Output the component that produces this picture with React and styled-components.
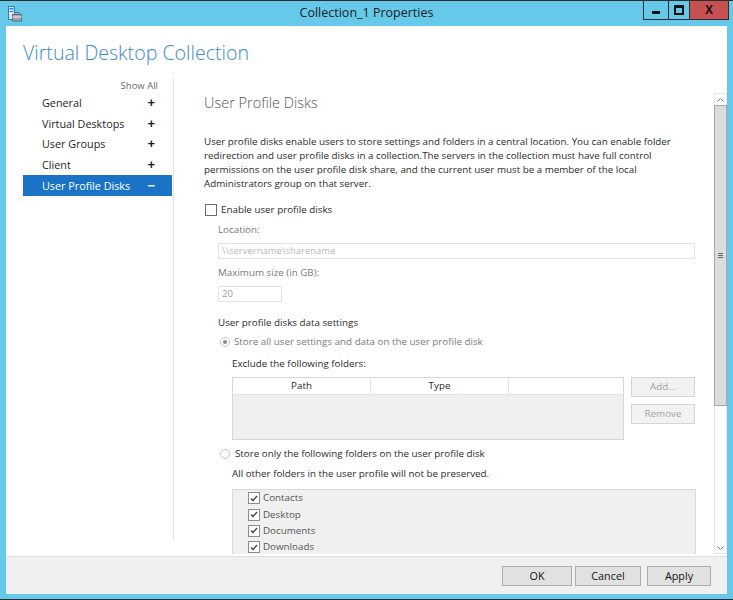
import React from 'react';
import styled, { createGlobalStyle } from 'styled-components';

const Global = createGlobalStyle`
  html, body {
    margin: 0;
    padding: 0;
    overflow: hidden;
  }
  body {
    font-family: "Open Sans", "Noto Sans", "Liberation Sans", sans-serif;
    color: #333;
  }
`;

const Frame = styled.div`
  width: 733px;
  height: 600px;
  box-sizing: border-box;
  background: #66c9ea;
  border-top: 1px solid #2d2d2d;
  border-bottom: 1px solid #2d2d2d;
  padding-bottom: 5px;
  display: flex;
  flex-direction: column;
`;

const TitleBar = styled.div`
  height: 25px;
  display: grid;
  grid-template-columns: 1fr auto 1fr;
  align-items: start;
`;

const AppIcon = styled.div`
  padding: 4px 0 0 8px;
  height: 16px;
`;

const Title = styled.div`
  font-size: 12.5px;
  line-height: 25px;
  color: #1b1b1b;
  margin-top: -1px;
`;

const WinButtons = styled.div`
  display: flex;
  justify-content: flex-end;
  padding-right: 4px;
`;

const WinButton = styled.div`
  width: ${p => p.$w}px;
  height: 19px;
  box-sizing: border-box;
  border: 1px solid #2d2d2d;
  border-top: none;
  border-left: ${p => (p.$first ? '1px solid #2d2d2d' : 'none')};
  background: ${p => (p.$close ? '#c75050' : 'transparent')};
  display: flex;
  align-items: center;
  justify-content: center;
  font-family: "Liberation Sans", sans-serif;
  font-weight: bold;
  font-size: 12px;
  color: #111;
`;

const MinGlyph = styled.div`
  width: 8px;
  height: 3px;
  background: #111;
  margin-top: 5px;
`;

const MaxGlyph = styled.div`
  width: 6px;
  height: 5px;
  border: 2px solid #111;
  border-top-width: 3px;
`;

const Client = styled.div`
  flex: 1;
  margin: 0 6px;
  background: #fff;
  display: flex;
  flex-direction: column;
  min-height: 0;
`;

const Header = styled.div`
  height: 52px;
  box-sizing: border-box;
  padding: 14px 0 0 17px;
  font-size: 19.6px;
  font-weight: 300;
  line-height: 26px;
  color: #3b8cc2;
`;

const Main = styled.div`
  flex: 1;
  display: flex;
  min-height: 0;
`;

const Nav = styled.div`
  width: 168px;
  box-sizing: border-box;
  padding: 2px 1px 0 17px;
  margin-bottom: 15px;
  border-right: 1px solid #e3e3e3;
`;

const ShowAll = styled.div`
  text-align: right;
  padding-right: 14px;
  font-size: 9.5px;
  line-height: 12px;
  color: #6a6a6a;
`;

const NavItem = styled.div`
  height: 20.75px;
  display: flex;
  align-items: center;
  justify-content: space-between;
  padding: 0 17px 0 19px;
  font-size: 10.8px;
  color: ${p => (p.$active ? '#fff' : '#1e1e1e')};
  background: ${p => (p.$active ? '#1a73c4' : 'transparent')};
`;

const Sign = styled.span`
  font-family: "Liberation Sans", sans-serif;
  font-weight: bold;
  font-size: 13px;
  line-height: 1;
`;

const Pane = styled.div`
  flex: 1;
  display: flex;
  margin: 15px 0 2px 0;
  min-width: 0;
`;

const Scroll = styled.div`
  flex: 1;
  overflow: hidden;
  padding: 0 18px 0 30px;
  font-size: 9.8px;
  line-height: 14px;
`;

const SectionTitle = styled.div`
  margin-top: 2px;
  font-size: 14.5px;
  font-weight: 300;
  line-height: 16px;
  color: #555;
`;

const Para = styled.p`
  margin: 24px 0 0 0;
  color: #2a2a2a;
  line-height: 14px;
`;

const Row = styled.div`
  display: flex;
  align-items: center;
  margin-top: ${p => p.$mt || 0}px;
  margin-left: ${p => p.$ml || 0}px;
  gap: ${p => p.$gap || 0}px;
  height: 14px;
  color: ${p => (p.$dim ? '#7a7a7a' : '#2a2a2a')};
`;

const Label = styled.div`
  margin-top: ${p => p.$mt || 0}px;
  margin-left: ${p => p.$ml || 0}px;
  height: 14px;
  color: ${p => (p.$dim ? '#7a7a7a' : '#2a2a2a')};
`;

const Box = styled.div`
  width: ${p => p.$size}px;
  height: ${p => p.$size}px;
  box-sizing: border-box;
  border: 1px solid ${p => p.$border || '#707070'};
  background: #fff;
  display: flex;
  align-items: center;
  justify-content: center;
  flex-shrink: 0;
`;

const Radio = styled.div`
  width: 10px;
  height: 10px;
  box-sizing: border-box;
  border-radius: 50%;
  border: 1px solid #c4c4c4;
  background: #fff;
  display: flex;
  align-items: center;
  justify-content: center;
  flex-shrink: 0;
  &::after {
    content: '';
    display: ${p => (p.$on ? 'block' : 'none')};
    width: 4px;
    height: 4px;
    border-radius: 50%;
    background: #8a8a8a;
  }
`;

const TextInput = styled.div`
  margin: ${p => p.$mt}px 0 0 14px;
  width: ${p => p.$w}px;
  height: 16px;
  box-sizing: border-box;
  border: 1px solid #e2e2e2;
  padding-left: 3px;
  font-size: 9.5px;
  line-height: 14px;
  color: ${p => p.$c};
`;

const TableRow = styled.div`
  display: flex;
  gap: 7px;
  margin: 6px 0 0 28px;
`;

const Table = styled.div`
  width: 392px;
  height: 63px;
  box-sizing: border-box;
  border: 1px solid #d7d7d7;
  background: #f0f0f0;
`;

const THead = styled.div`
  display: grid;
  grid-template-columns: 138px 138px 1fr;
  height: 16px;
  background: #fff;
  border-bottom: 1px solid #e4e4e4;
`;

const Th = styled.div`
  text-align: center;
  line-height: 16px;
  color: #2a2a2a;
  border-right: ${p => (p.$last ? 'none' : '1px solid #e4e4e4')};
`;

const SideButtons = styled.div`
  display: flex;
  flex-direction: column;
  gap: 7px;
`;

const SideButton = styled.div`
  width: 64px;
  height: 20px;
  box-sizing: border-box;
  border: 1px solid #d5d5d5;
  background: #f2f2f2;
  color: #a3a3a3;
  text-align: center;
  line-height: 18px;
`;

const FolderList = styled.div`
  margin: 8px 0 0 28px;
  height: 90px;
  box-sizing: border-box;
  border: 1px solid #d9d9d9;
  border-bottom: none;
  background: #f0f0f0;
  padding: 0 0 0 15px;
`;

const FolderRow = styled.div`
  display: flex;
  align-items: center;
  gap: 3px;
  height: 16.4px;
  color: #555;
`;

const ScrollBar = styled.div`
  width: 13px;
  box-sizing: border-box;
  border: 1px solid #e6e6e6;
  display: flex;
  flex-direction: column;
  background: #fff;
`;

const Arrow = styled.div`
  height: 11px;
  display: flex;
  align-items: center;
  justify-content: center;
`;

const Thumb = styled.div`
  height: 301px;
  box-sizing: border-box;
  margin: 0 -1px;
  border: 1px solid #a8a8a8;
  background: #dcdcdc;
  display: flex;
  align-items: center;
  justify-content: center;
`;

const Grip = styled.div`
  width: 5px;
  height: 5px;
  background: repeating-linear-gradient(#666 0 1px, transparent 1px 2px);
`;

const Track = styled.div`
  flex: 1;
`;

const Footer = styled.div`
  height: 38px;
  box-sizing: border-box;
  border-top: 1px solid #dfdfdf;
  background: #f0f0f0;
  display: flex;
  align-items: center;
  justify-content: flex-end;
  padding-right: 16px;
`;

const DlgButton = styled.div`
  width: ${p => p.$w}px;
  height: 20px;
  margin-left: ${p => p.$ml}px;
  box-sizing: border-box;
  border: 1px solid #adadad;
  background: #e1e1e1;
  text-align: center;
  line-height: 18px;
  font-size: 10.8px;
  color: #111;
`;

const Check = ({ size = 12, border }) => (
  <Box $size={size} $border={border}>
    <svg width="8" height="7" viewBox="0 0 8 7">
      <path d="M1 3.5 L3 5.5 L7 1" fill="none" stroke="#3a3a3a" strokeWidth="1.3" />
    </svg>
  </Box>
);

const navItems = ['General', 'Virtual Desktops', 'User Groups', 'Client'];
const folders = ['Contacts', 'Desktop', 'Documents', 'Downloads'];

export default function App() {
  return (
    <>
      <Global />
      <Frame>
        <TitleBar>
          <AppIcon>
            <svg width="14" height="16" viewBox="0 0 14 16">
              <rect x="0.5" y="0.5" width="6" height="13" fill="#dbe9f6" stroke="#2c7fc9" />
              <rect x="1.5" y="2" width="4" height="1.5" fill="#2c7fc9" />
              <rect x="1.5" y="5" width="4" height="1" fill="#2c7fc9" />
              <rect x="4.5" y="8.5" width="9" height="6.5" fill="#9aa7b3" stroke="#5f6d7a" />
              <rect x="7" y="6.5" width="4" height="2" fill="none" stroke="#5f6d7a" />
              <rect x="4.5" y="10.5" width="9" height="1" fill="#e9eef2" />
            </svg>
          </AppIcon>
          <Title>Collection_1 Properties</Title>
          <WinButtons>
            <WinButton $w={26} $first><MinGlyph /></WinButton>
            <WinButton $w={21}><MaxGlyph /></WinButton>
            <WinButton $w={39} $close>X</WinButton>
          </WinButtons>
        </TitleBar>
        <Client>
          <Header>Virtual Desktop Collection</Header>
          <Main>
            <Nav>
              <ShowAll>Show All</ShowAll>
              {navItems.map(n => (
                <NavItem key={n}>
                  {n}
                  <Sign>+</Sign>
                </NavItem>
              ))}
              <NavItem $active>
                User Profile Disks
                <Sign>−</Sign>
              </NavItem>
            </Nav>
            <Pane>
              <Scroll>
                <SectionTitle>User Profile Disks</SectionTitle>
                <Para>
                  User profile disks enable users to store settings and folders in a central location. You can enable folder<br />
                  redirection and user profile disks in a collection.The servers in the collection must have full control<br />
                  permissions on the user profile disk share, and the current user must be a member of the local<br />
                  Administrators group on that server.
                </Para>
                <Row $mt={12} $ml={1} $gap={4}>
                  <Box $size={12} $border="#6b6b6b" />
                  Enable user profile disks
                </Row>
                <Label $mt={6} $ml={14} $dim>Location:</Label>
                <TextInput $mt={6} $w={477} $c="#b8b8b8">\\servername\sharename</TextInput>
                <Label $mt={7} $ml={14} $dim>Maximum size (in GB):</Label>
                <TextInput $mt={6} $w={64} $c="#9a9a9a">20</TextInput>
                <Label $mt={14} $ml={14}>User profile disks data settings</Label>
                <Row $mt={5} $ml={16} $gap={4} $dim>
                  <Radio $on />
                  Store all user settings and data on the user profile disk
                </Row>
                <Label $mt={8} $ml={28}>Exclude the following folders:</Label>
                <TableRow>
                  <Table>
                    <THead>
                      <Th>Path</Th>
                      <Th>Type</Th>
                      <Th $last />
                    </THead>
                  </Table>
                  <SideButtons>
                    <SideButton>Add...</SideButton>
                    <SideButton>Remove</SideButton>
                  </SideButtons>
                </TableRow>
                <Row $mt={7} $ml={16} $gap={5}>
                  <Radio />
                  Store only the following folders on the user profile disk
                </Row>
                <Label $mt={6} $ml={28}>All other folders in the user profile will not be preserved.</Label>
                <FolderList>
                  {folders.map(f => (
                    <FolderRow key={f}>
                      <Check border="#8c8c8c" />
                      {f}
                    </FolderRow>
                  ))}
                </FolderList>
              </Scroll>
              <ScrollBar>
                <Arrow>
                  <svg width="7" height="4" viewBox="0 0 7 4">
                    <path d="M0.5 3.5 L3.5 0.5 L6.5 3.5" fill="none" stroke="#777" />
                  </svg>
                </Arrow>
                <Thumb><Grip /></Thumb>
                <Track />
                <Arrow>
                  <svg width="7" height="4" viewBox="0 0 7 4">
                    <path d="M0.5 0.5 L3.5 3.5 L6.5 0.5" fill="none" stroke="#777" />
                  </svg>
                </Arrow>
              </ScrollBar>
            </Pane>
          </Main>
          <Footer>
            <DlgButton $w={70} $ml={0}>OK</DlgButton>
            <DlgButton $w={66} $ml={3}>Cancel</DlgButton>
            <DlgButton $w={64} $ml={6}>Apply</DlgButton>
          </Footer>
        </Client>
      </Frame>
    </>
  );
}
